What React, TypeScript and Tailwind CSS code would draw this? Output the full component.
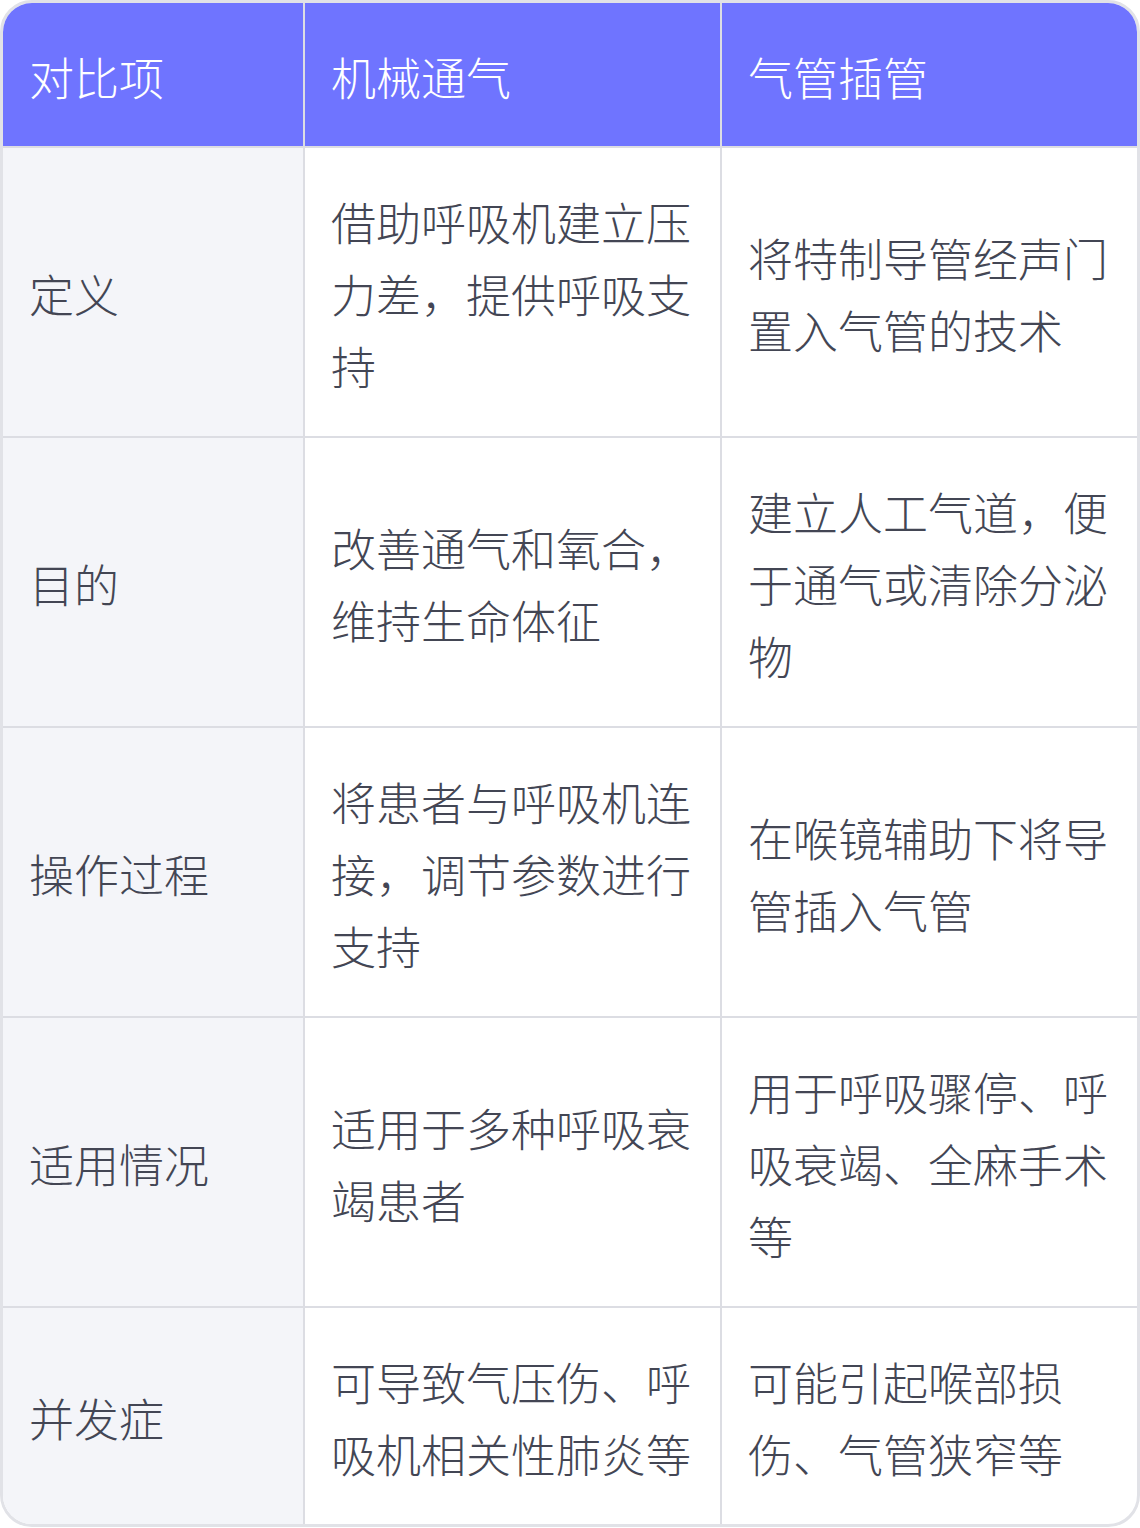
const rows = [
  {
    item: "定义",
    mv: "借助呼吸机建立压力差，提供呼吸支持",
    ti: "将特制导管经声门置入气管的技术",
  },
  {
    item: "目的",
    mv: "改善通气和氧合，维持生命体征",
    ti: "建立人工气道，便于通气或清除分泌物",
  },
  {
    item: "操作过程",
    mv: "将患者与呼吸机连接，调节参数进行支持",
    ti: "在喉镜辅助下将导管插入气管",
  },
  {
    item: "适用情况",
    mv: "适用于多种呼吸衰竭患者",
    ti: "用于呼吸骤停、呼吸衰竭、全麻手术等",
  },
  {
    item: "并发症",
    mv: "可导致气压伤、呼吸机相关性肺炎等",
    ti: "可能引起喉部损伤、气管狭窄等",
  },
];

export default function App() {
  return (
    <div
      className="w-[1140px] bg-white"
      style={{ fontFamily: '"Noto Sans CJK SC", "Noto Sans", sans-serif' }}
    >
      <div className="overflow-hidden rounded-[32px] border-[3px] border-[#e1e2e7] text-[45px] font-light leading-[72px] text-[#434654]">
        <div className="grid grid-cols-[300px_2px_415px_2px_415px] bg-[#6f74ff] text-white">
          <div className="flex h-[143px] items-center px-[26px] pt-1">对比项</div>
          <div className="bg-[#dcdde3]" />
          <div className="flex h-[143px] items-center px-[26px] pt-1">机械通气</div>
          <div className="bg-[#dcdde3]" />
          <div className="flex h-[143px] items-center px-[26px] pt-1">气管插管</div>
        </div>
        {rows.map((r) => (
          <div
            key={r.item}
            className="grid grid-cols-[300px_2px_415px_2px_415px] border-t-2 border-[#dcdde3]"
          >
            <div className="flex items-center bg-[#f4f5f9] px-[26px] pt-[38px] pb-[34px]">{r.item}</div>
            <div className="bg-[#dcdde3]" />
            <div className="flex items-center px-[26px] pt-[38px] pb-[34px]">{r.mv}</div>
            <div className="bg-[#dcdde3]" />
            <div className="flex items-center px-[26px] pt-[38px] pb-[34px]">{r.ti}</div>
          </div>
        ))}
      </div>
    </div>
  );
}
